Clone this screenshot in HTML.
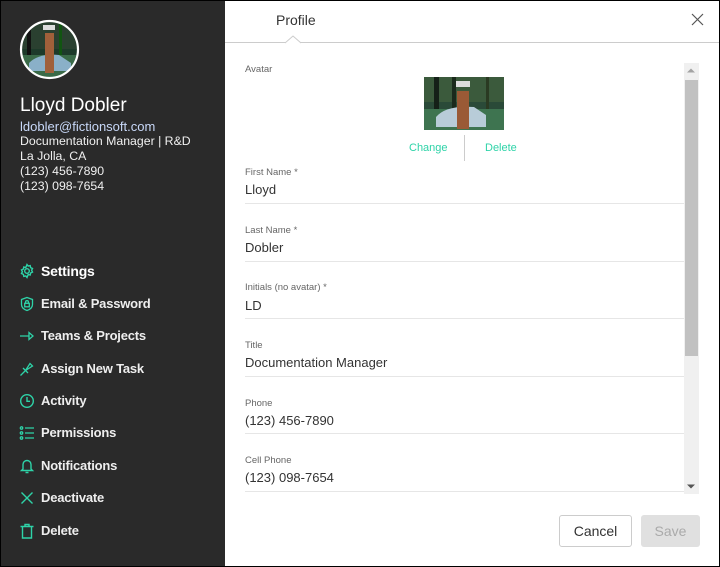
<!DOCTYPE html>
<html><head><meta charset="utf-8"><style>
*{margin:0;padding:0;box-sizing:border-box}
body{width:720px;height:567px;overflow:hidden;font-family:"Liberation Sans",sans-serif;background:#fff;position:relative}
.frame{position:absolute;left:0;top:0;width:720px;height:567px;border:1px solid #000;pointer-events:none;z-index:10}
.side{position:absolute;left:0;top:0;width:225px;height:567px;background:#2a2a2a;color:#f0f0f0}
.t{position:absolute;white-space:nowrap}
.nav{position:absolute;left:41px;font-size:13px;font-weight:bold;color:#eee;white-space:nowrap;letter-spacing:-0.2px}
.ic{position:absolute;left:19px;width:16px;height:16px}
.lbl{position:absolute;left:245px;font-size:9.5px;color:#666}
.val{position:absolute;left:245px;font-size:13px;color:#333}
.ul{position:absolute;left:245px;width:439px;height:1px;background:#e6e6e6}
</style></head><body>
<div class="side">
<svg style="position:absolute;left:19px;top:19px" width="61" height="61" viewBox="0 0 61 61">
<defs><clipPath id="c"><circle cx="30.5" cy="30.5" r="28"/></clipPath></defs>
<g clip-path="url(#c)">
<rect width="61" height="61" fill="#1d3a2a"/>
<rect x="0" y="0" width="61" height="30" fill="#2a4030"/>
<rect x="8" y="0" width="4" height="40" fill="#111"/><rect x="40" y="0" width="3" height="40" fill="#151"/>
<rect x="0" y="36" width="61" height="25" fill="#3a6a48"/>
<path d="M10 44 Q20 34 40 36 L52 44 L52 52 L10 52Z" fill="#8ab0c8"/>
<rect x="26" y="14" width="9" height="40" fill="#a0603a"/>
<rect x="24" y="6" width="12" height="5" fill="#ddd"/>
</g>
<circle cx="30.5" cy="30.5" r="28.5" fill="none" stroke="#fff" stroke-width="2.2"/>
</svg>
<div class="t" style="left:20px;top:95px;font-size:19px;color:#fff">Lloyd Dobler</div>
<div class="t" style="left:20px;top:119px;font-size:13px;color:#c8d8f8">ldobler@fictionsoft.com</div>
<div class="t" style="left:20px;top:134px;font-size:12.3px">Documentation Manager | R&amp;D</div>
<div class="t" style="left:20px;top:149px;font-size:12.3px">La Jolla, CA</div>
<div class="t" style="left:20px;top:164px;font-size:12.3px">(123) 456-7890</div>
<div class="t" style="left:20px;top:179px;font-size:12.3px">(123) 098-7654</div>

<svg class="ic" style="top:263px" viewBox="0 0 16 16" fill="none" stroke="#2ed3a8" stroke-width="1.4"><circle cx="8" cy="8" r="2.3"/><path d="M8 1.5l1.2 1.6 2-.5.4 2 1.9.9-.9 1.8.9 1.8-1.9.9-.4 2-2-.5L8 14.5l-1.2-1.6-2 .5-.4-2-1.9-.9.9-1.8-.9-1.8 1.9-.9.4-2 2 .5z"/></svg>
<div class="nav" style="top:263px;font-size:14px;color:#fff">Settings</div>
<svg class="ic" style="top:296px" viewBox="0 0 16 16" fill="none" stroke="#2ed3a8" stroke-width="1.3"><path d="M8 1.5l5.5 2v5c0 3-2.5 5-5.5 6-3-1-5.5-3-5.5-6v-5z"/><rect x="5.7" y="7.3" width="4.6" height="3.5"/><path d="M6.6 7.3V6a1.4 1.4 0 0 1 2.8 0v1.3"/></svg>
<div class="nav" style="top:296px">Email &amp; Password</div>
<svg class="ic" style="top:328px" viewBox="0 0 16 16" fill="none" stroke="#2ed3a8" stroke-width="1.3"><path d="M1 8h9M10 4.5v7l4-3.5z"/></svg>
<div class="nav" style="top:328px">Teams &amp; Projects</div>
<svg class="ic" style="top:361px" viewBox="0 0 16 16" fill="none" stroke="#2ed3a8" stroke-width="1.3"><path d="M1.5 14.5l4.5-4.5M4 7l5 5M6.5 9.5L11 2.5l2.5 2.5L6.5 9.5"/></svg>
<div class="nav" style="top:361px">Assign New Task</div>
<svg class="ic" style="top:393px" viewBox="0 0 16 16" fill="none" stroke="#2ed3a8" stroke-width="1.4"><circle cx="8" cy="8" r="6.3"/><path d="M8 4v4.3h3"/></svg>
<div class="nav" style="top:393px">Activity</div>
<svg class="ic" style="top:425px" viewBox="0 0 16 16" fill="none" stroke="#2ed3a8" stroke-width="1.3"><circle cx="2.5" cy="3" r="1.2"/><circle cx="2.5" cy="8" r="1.2"/><circle cx="2.5" cy="13" r="1.2"/><path d="M6 3h9M6 8h9M6 13h9"/></svg>
<div class="nav" style="top:425px">Permissions</div>
<svg class="ic" style="top:458px" viewBox="0 0 16 16" fill="none" stroke="#2ed3a8" stroke-width="1.4"><path d="M4 11V6.5a4 4 0 0 1 8 0V11l1.5 1.5h-11zM6.5 14.5h3"/></svg>
<div class="nav" style="top:458px">Notifications</div>
<svg class="ic" style="top:490px" viewBox="0 0 16 16" fill="none" stroke="#2ed3a8" stroke-width="1.4"><path d="M2.5 2.5l11 11M13.5 2.5l-11 11"/></svg>
<div class="nav" style="top:490px">Deactivate</div>
<svg class="ic" style="top:523px" viewBox="0 0 16 16" fill="none" stroke="#2ed3a8" stroke-width="1.4"><path d="M1.5 3.5h13M6 3.5V1.5h4v2M3.5 3.5V15h9V3.5"/></svg>
<div class="nav" style="top:523px">Delete</div>
</div>

<div class="t" style="left:276px;top:12px;font-size:14px;color:#333">Profile</div>
<svg style="position:absolute;left:691px;top:13px" width="13" height="13" viewBox="0 0 13 13"><path d="M1 1l11 11M12 1L1 12" stroke="#555" stroke-width="1.2"/></svg>
<div style="position:absolute;left:225px;top:42px;width:495px;height:1px;background:#ccc"></div>
<svg style="position:absolute;left:285px;top:35px" width="20" height="9"><path d="M0 8L8 1L16 8" fill="#fff" stroke="#ccc" stroke-width="1"/></svg>

<div class="lbl" style="top:64px">Avatar</div>
<svg style="position:absolute;left:424px;top:77px" width="80" height="53" viewBox="0 0 80 53">
<rect width="80" height="53" fill="#2a4a38"/>
<rect x="0" y="0" width="80" height="25" fill="#3b5a3c"/>
<rect x="10" y="0" width="5" height="35" fill="#152018"/><rect x="28" y="0" width="4" height="32" fill="#1a2a1c"/><rect x="62" y="0" width="3" height="32" fill="#2a3a22"/>
<rect x="0" y="32" width="80" height="21" fill="#3e7450"/>
<path d="M12 40 Q22 28 50 30 L62 38 L62 50 L12 50Z" fill="#b8ccd8"/>
<rect x="33" y="14" width="12" height="38" fill="#9a5a36"/>
<rect x="32" y="4" width="14" height="6" fill="#ddd"/>
</svg>
<div class="t" style="left:409px;top:142px;font-size:11px;color:#2ed3a8">Change</div>
<div style="position:absolute;left:464px;top:135px;width:1px;height:26px;background:#ccc"></div>
<div class="t" style="left:485px;top:142px;font-size:11px;color:#2ed3a8">Delete</div>

<div class="lbl" style="top:167px">First Name *</div><div class="val" style="top:182px">Lloyd</div><div class="ul" style="top:203px"></div>
<div class="lbl" style="top:225px">Last Name *</div><div class="val" style="top:240px">Dobler</div><div class="ul" style="top:261px"></div>
<div class="lbl" style="top:282px">Initials (no avatar) *</div><div class="val" style="top:298px">LD</div><div class="ul" style="top:318px"></div>
<div class="lbl" style="top:340px">Title</div><div class="val" style="top:355px">Documentation Manager</div><div class="ul" style="top:376px"></div>
<div class="lbl" style="top:398px">Phone</div><div class="val" style="top:413px">(123) 456-7890</div><div class="ul" style="top:433px"></div>
<div class="lbl" style="top:455px">Cell Phone</div><div class="val" style="top:470px">(123) 098-7654</div><div class="ul" style="top:491px"></div>

<div style="position:absolute;left:684px;top:63px;width:15px;height:431px;background:#f0f0f0"></div>
<div style="position:absolute;left:685px;top:80px;width:13px;height:276px;background:#c1c1c1"></div>
<svg style="position:absolute;left:687px;top:68px" width="8" height="5"><path d="M0 4.5L4 0.5L8 4.5z" fill="#a3a3a3"/></svg>
<svg style="position:absolute;left:687px;top:484px" width="8" height="5"><path d="M0 0.5L4 4.5L8 0.5z" fill="#555"/></svg>

<div style="position:absolute;left:559px;top:515px;width:73px;height:32px;border:1px solid #ccc;border-radius:3px;font-size:14px;color:#333;text-align:center;line-height:30px">Cancel</div>
<div style="position:absolute;left:641px;top:515px;width:59px;height:32px;background:#e0e0e0;border-radius:3px;font-size:14px;color:#aaa;text-align:center;line-height:32px">Save</div>
<div class="frame"></div>
</body></html>
